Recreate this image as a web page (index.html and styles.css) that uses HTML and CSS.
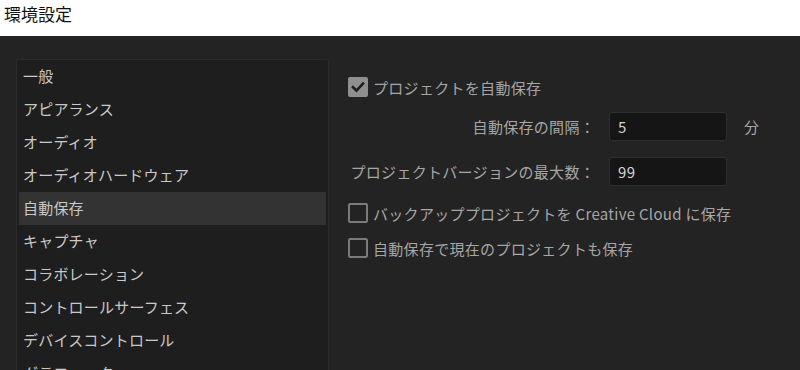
FILE: index.html
```html
<!DOCTYPE html>
<html lang="ja">
<head>
<meta charset="utf-8">
<link rel="stylesheet" href="styles.css">
</head>
<body>
<header class="titlebar">環境設定</header>
<main class="dialog">
  <nav class="sidebar">
    <div class="item">一般</div>
    <div class="item">アピアランス</div>
    <div class="item">オーディオ</div>
    <div class="item">オーディオハードウェア</div>
    <div class="item selected">自動保存</div>
    <div class="item">キャプチャ</div>
    <div class="item">コラボレーション</div>
    <div class="item">コントロールサーフェス</div>
    <div class="item">デバイスコントロール</div>
    <div class="item">グラフィック</div>
  </nav>
  <section class="content">
    <label class="check-row first">
      <span class="box checked"><svg viewBox="0 0 20 20" width="20" height="20"><path d="M5 10.2 L8.5 13.6 L15 6.6" fill="none" stroke="#1e1e1e" stroke-width="2.6" stroke-linecap="square"/></svg></span>
      <span>プロジェクトを自動保存</span>
    </label>
    <div class="field-row r1">
      <span class="flabel">自動保存の間隔：</span>
      <span class="input">5</span>
      <span class="unit">分</span>
    </div>
    <div class="field-row r2">
      <span class="flabel">プロジェクトバージョンの最大数：</span>
      <span class="input">99</span>
    </div>
    <label class="check-row c2">
      <span class="box"></span>
      <span>バックアッププロジェクトを Creative Cloud に保存</span>
    </label>
    <label class="check-row c3">
      <span class="box"></span>
      <span>自動保存で現在のプロジェクトも保存</span>
    </label>
  </section>
</main>
</body>
</html>
```
FILE: styles.css
```css
* { box-sizing: border-box; }
html, body { margin: 0; padding: 0; }
body {
  width: 800px;
  height: 370px;
  overflow: hidden;
  background: #232323;
  font-family: "Noto Sans CJK JP", "Noto Sans", sans-serif;
}
.titlebar {
  height: 36px;
  background: #ffffff;
  color: #111;
  font-size: 17px;
  line-height: 28px;
  padding-left: 4px;
}
.dialog {
  display: flex;
  padding: 23px 0 0 16px;
  height: 334px;
}
.sidebar {
  width: 313px;
  flex: none;
  background: #1e1e1e;
  border: 1px solid #2c2c2c;
  border-bottom: none;
  border-radius: 3px 3px 0 0;
  padding: 0 2px;
  overflow: hidden;
}
.item {
  height: 33px;
  line-height: 32px;
  padding-left: 4px;
  color: #c9c9c9;
  font-size: 15px;
  white-space: nowrap;
  letter-spacing: 0.2px;
}
.item.selected { background: #333333; }
.content {
  flex: 1;
  padding: 18px 0 0 19px;
  color: #a6a6a6;
  font-size: 15px;
  letter-spacing: 0.3px;
}
.check-row {
  display: flex;
  align-items: center;
  gap: 5px;
  height: 20px;
}
.box {
  width: 20px;
  height: 20px;
  border: 2px solid #7a7a7a;
  border-radius: 2px;
  flex: none;
  display: flex;
}
.box.checked {
  background: #8f8f8f;
  border-color: #8f8f8f;
}
.box.checked svg { margin: -2px; }
.field-row {
  display: flex;
  align-items: center;
  height: 29px;
}
.r1 { margin-top: 15px; }
.r2 { margin-top: 16px; }
.flabel {
  width: 261px;
  text-align: right;
  padding-right: 14px;
  white-space: nowrap;
}
.input {
  width: 118px;
  height: 29px;
  background: #151515;
  border: 1px solid #2e2e2e;
  border-radius: 3px;
  color: #d4d4d4;
  line-height: 27px;
  padding-left: 8px;
}
.unit { margin-left: 17px; }
.c2 { margin-top: 17px; }
.c3 { margin-top: 15px; }
```
